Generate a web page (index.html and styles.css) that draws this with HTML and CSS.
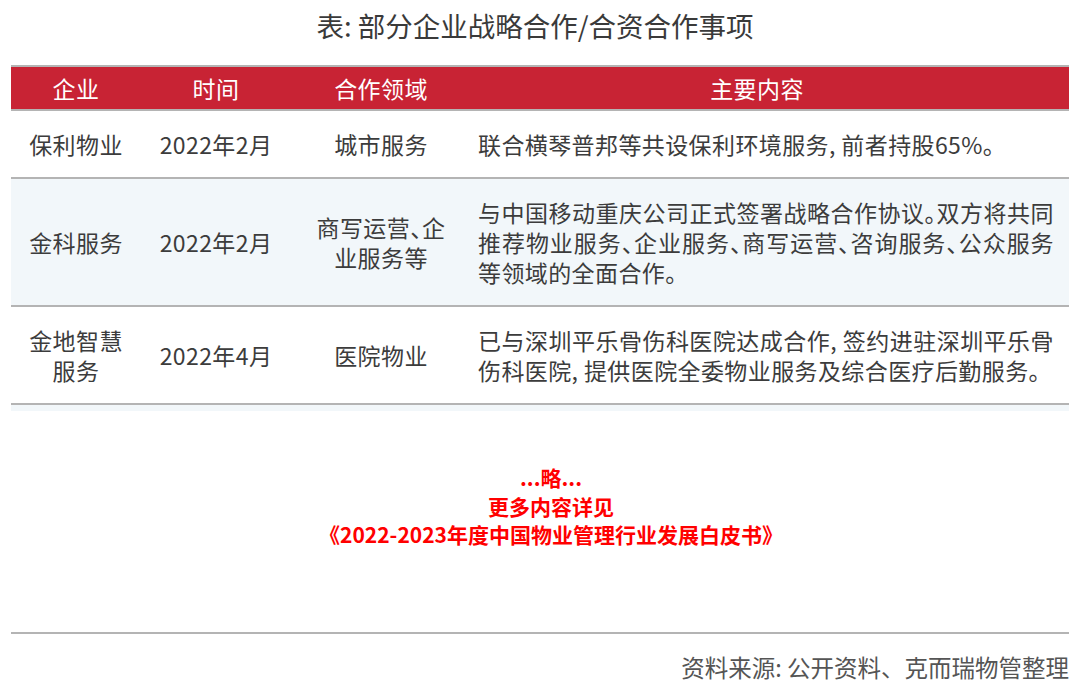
FILE: index.html
```html
<!DOCTYPE html>
<html lang="zh-CN">
<head>
  <meta charset="UTF-8" />
  <title>部分企业战略合作/合资合作事项</title>
  <link rel="stylesheet" href="styles.css">
</head>
<body>
  <main class="page">
    <h1 class="title">表: 部分企业战略合作/合资合作事项</h1>

    <table class="deals">
      <thead>
        <tr>
          <th class="col-company">企业</th>
          <th class="col-date">时间</th>
          <th class="col-field">合作领域</th>
          <th class="col-main">主要内容</th>
        </tr>
      </thead>
      <tbody>
        <tr>
          <td class="col-company">保利物业</td>
          <td class="col-date">2022年2月</td>
          <td class="col-field">城市服务</td>
          <td class="col-main">联合横琴普邦等共设保利环境服务, 前者持股65%。</td>
        </tr>
        <tr class="shaded">
          <td class="col-company">金科服务</td>
          <td class="col-date">2022年2月</td>
          <td class="col-field">商写运营、企业服务等</td>
          <td class="col-main">与中国移动重庆公司正式签署战略合作协议。双方将共同推荐物业服务、企业服务、商写运营、咨询服务、公众服务等领域的全面合作。</td>
        </tr>
        <tr>
          <td class="col-company">金地智慧服务</td>
          <td class="col-date">2022年4月</td>
          <td class="col-field">医院物业</td>
          <td class="col-main">已与深圳平乐骨伤科医院达成合作, 签约进驻深圳平乐骨伤科医院, 提供医院全委物业服务及综合医疗后勤服务。</td>
        </tr>
        <tr class="shaded cut">
          <td colspan="4"></td>
        </tr>
      </tbody>
    </table>

    <div class="more">
      <p>...略...</p>
      <p>更多内容详见</p>
      <p>《2022-2023年度中国物业管理行业发展白皮书》</p>
    </div>

    <footer class="source">资料来源: 公开资料、克而瑞物管整理</footer>
  </main>
</body>
</html>
```

FILE: styles.css
```css
/* Page frame */
html, body {
  margin: 0;
  background: #fff;
}

body {
  font-family: "Noto Sans CJK SC", "Noto Sans", sans-serif;
  color: #3c3c3c;
}

.page {
  width: 1058px;
  margin: 0 11px;
}

.title {
  margin: 0 0 20px;
  padding: 5px 10px 0 0;
  font-size: 27.5px;
  font-weight: normal;
  line-height: 40px;
  text-align: center;
  color: #3a3a3a;
}

/* Table */
.deals {
  width: 100%;
  border-collapse: collapse;
  table-layout: fixed;
  font-size: 23px;
  line-height: 30px;
  letter-spacing: 0.4px;
}

.deals th {
  background-color: #c82334;
  color: #fff;
  font-weight: normal;
  height: 42px;
  padding: 0;
  border-top: 2px solid #b4b4b4;
  border-bottom: 2px solid #b4b4b4;
  text-align: center;
}

.deals td {
  padding: 18px 0;
  border-bottom: 2px solid #b4b4b4;
  text-align: center;
  vertical-align: middle;
  font-feature-settings: "halt";
}

.deals tr.shaded td {
  background-color: #f2f7fa;
}

.deals tr.cut td {
  padding: 0;
  height: 6px;
  border-bottom: none;
}

.col-company { width: 130px; }
.col-date { width: 150px; }
.col-field { width: 180px; }

.deals td.col-company { padding-left: 15px; padding-right: 15px; }
.deals td.col-field { padding-left: 18px; padding-right: 18px; }

.deals td.col-main {
  text-align: justify;
  padding-left: 7px;
  padding-right: 15px;
}

.deals th.col-main {
  padding-right: 26px;
}

/* Red note */
.more {
  margin-top: 52px;
  padding-left: 22px;
  text-align: center;
  color: #f00;
  font-weight: bold;
  font-size: 21px;
  line-height: 28.5px;
}

.more p {
  margin: 0;
}

.source {
  margin-top: 83px;
  padding-top: 17px;
  border-top: 2px solid #b4b4b4;
  text-align: right;
  font-size: 23.5px;
  line-height: 32px;
  color: #555;
}
```
